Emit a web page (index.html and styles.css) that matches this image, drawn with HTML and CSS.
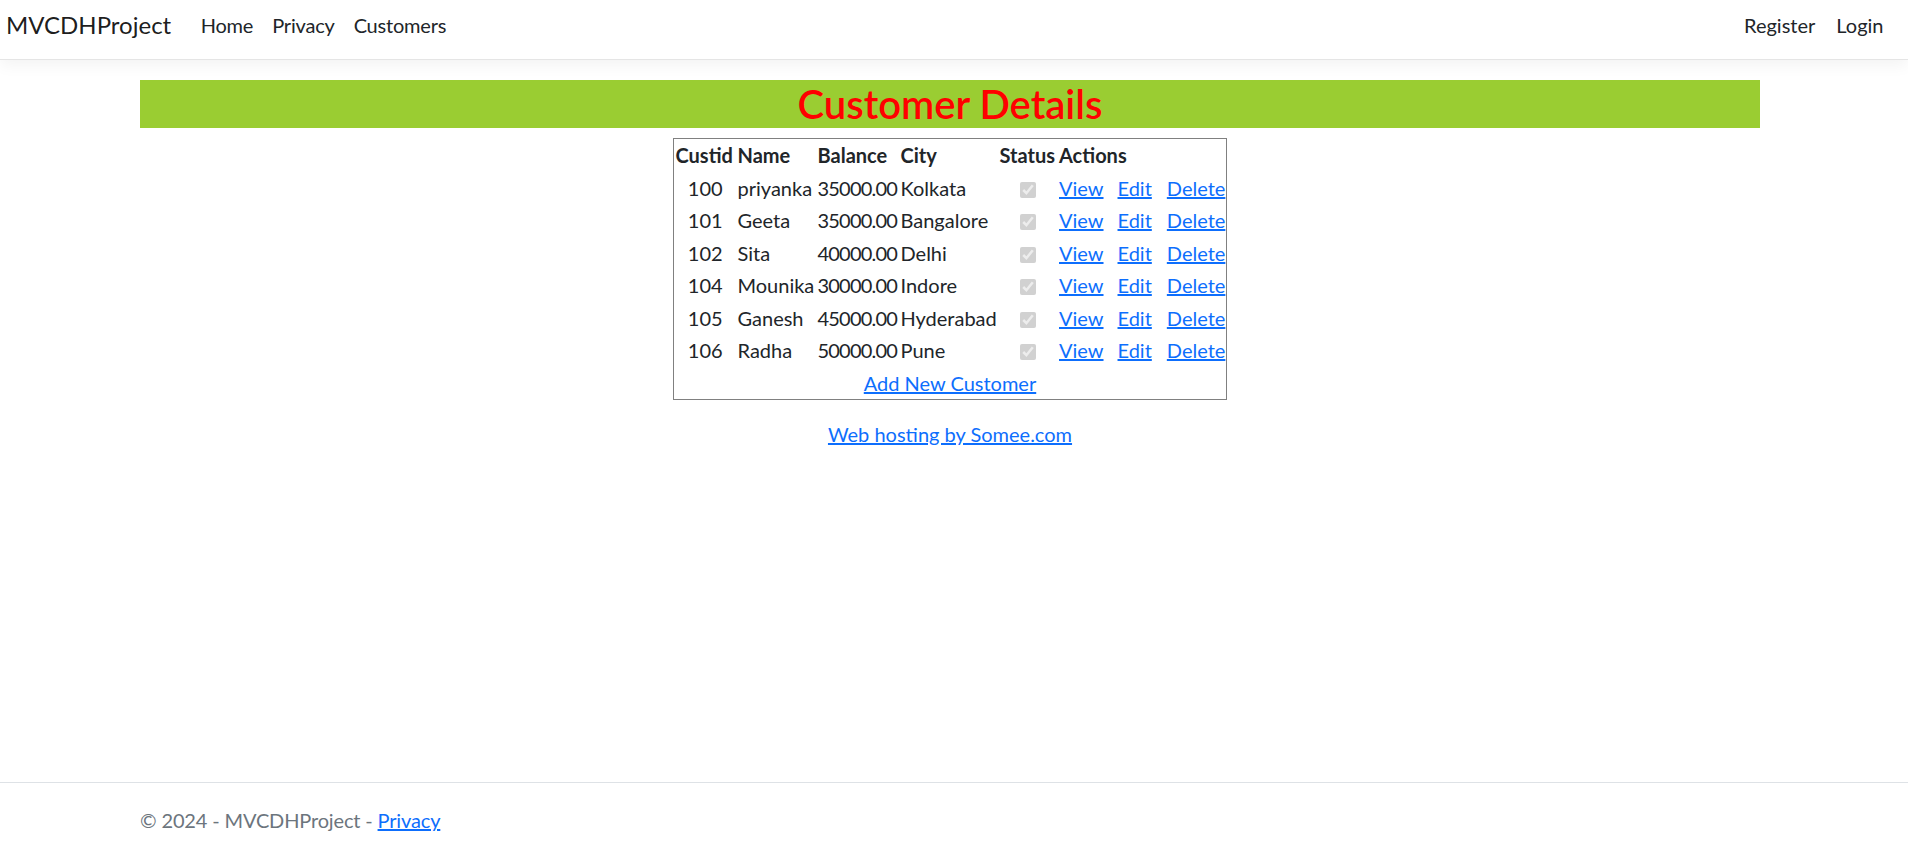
FILE: index.html
```html
<!DOCTYPE html>
<html lang="en">
<head>
<meta charset="utf-8">
<title>Customer Details - MVCDHProject</title>
<link rel="stylesheet" href="styles.css">
</head>
<body>
<header class="navbar">
  <a class="brand" href="#">MVCDHProject</a>
  <nav class="nav-main">
    <a class="nav-link" href="#">Home</a>
    <a class="nav-link" href="#">Privacy</a>
    <a class="nav-link" href="#">Customers</a>
  </nav>
  <nav class="nav-auth">
    <a class="nav-link" href="#">Register</a>
    <a class="nav-link" href="#">Login</a>
  </nav>
</header>
<div class="container">
  <main class="main">
    <h1 class="title">Customer Details</h1>
    <table class="customers">
      <colgroup>
        <col class="c-id"><col class="c-name"><col class="c-bal"><col class="c-city"><col class="c-status"><col class="c-actions">
      </colgroup>
      <thead>
        <tr><th>Custid</th><th>Name</th><th>Balance</th><th>City</th><th>Status</th><th>Actions</th></tr>
      </thead>
      <tbody>
        <tr><td class="id">100</td><td>priyanka</td><td class="bal">35000.00</td><td>Kolkata</td><td class="status"><input type="checkbox" checked disabled></td><td><div class="actions"><a href="#">View</a><a href="#">Edit</a><a href="#">Delete</a></div></td></tr>
        <tr><td class="id">101</td><td>Geeta</td><td class="bal">35000.00</td><td>Bangalore</td><td class="status"><input type="checkbox" checked disabled></td><td><div class="actions"><a href="#">View</a><a href="#">Edit</a><a href="#">Delete</a></div></td></tr>
        <tr><td class="id">102</td><td>Sita</td><td class="bal">40000.00</td><td>Delhi</td><td class="status"><input type="checkbox" checked disabled></td><td><div class="actions"><a href="#">View</a><a href="#">Edit</a><a href="#">Delete</a></div></td></tr>
        <tr><td class="id">104</td><td>Mounika</td><td class="bal">30000.00</td><td>Indore</td><td class="status"><input type="checkbox" checked disabled></td><td><div class="actions"><a href="#">View</a><a href="#">Edit</a><a href="#">Delete</a></div></td></tr>
        <tr><td class="id">105</td><td>Ganesh</td><td class="bal">45000.00</td><td>Hyderabad</td><td class="status"><input type="checkbox" checked disabled></td><td><div class="actions"><a href="#">View</a><a href="#">Edit</a><a href="#">Delete</a></div></td></tr>
        <tr><td class="id">106</td><td>Radha</td><td class="bal">50000.00</td><td>Pune</td><td class="status"><input type="checkbox" checked disabled></td><td><div class="actions"><a href="#">View</a><a href="#">Edit</a><a href="#">Delete</a></div></td></tr>
        <tr><td class="add" colspan="6"><a href="#">Add New Customer</a></td></tr>
      </tbody>
    </table>
    <p class="hosting"><a href="#">Web hosting by Somee.com</a></p>
  </main>
</div>
<footer class="footer">
  <div class="container">© 2024 - MVCDHProject - <a href="#">Privacy</a></div>
</footer>
</body>
</html>
```
FILE: styles.css
```css
html, body {
  margin: 0;
  padding: 0;
}
body {
  font-family: "Segoe UI", Lato, "Liberation Sans", sans-serif;
  font-size: 20px;
  line-height: 30px;
  color: #212529;
  background: #fff;
  min-height: 100vh;
  display: flex;
  flex-direction: column;
}
a {
  color: #0d6efd;
  text-decoration: underline;
}

/* navbar */
.navbar {
  height: 60px;
  box-sizing: border-box;
  display: flex;
  align-items: flex-start;
  padding: 10px 14px 0 6px;
  border-bottom: 1px solid #e5e5e5;
  box-shadow: 0 5px 15px rgba(0, 0, 0, 0.05);
  background: #fff;
}
.brand {
  font-size: 24px;
  line-height: 30px;
  color: rgba(0, 0, 0, 0.9);
  text-decoration: none;
  margin-right: 20px;
}
.nav-main, .nav-auth {
  display: flex;
  align-items: center;
}
.nav-auth {
  margin-left: auto;
}
.nav-link {
  color: #212529;
  text-decoration: none;
  padding: 0 9.5px;
  font-size: 20px;
  line-height: 30px;
}
.nav-main .nav-link {
  letter-spacing: -0.2px;
}
.nav-auth .nav-link {
  padding: 0 10.5px;
}

/* content */
.container {
  width: 1620px;
  margin: 0 148px 0 140px;
}
.main {
  padding-top: 20px;
}
.title {
  margin: 0;
  height: 48px;
  line-height: 48px;
  font-size: 40px;
  font-weight: 600;
  color: #ff0000;
  background: #9acd32;
  text-align: center;
}

.customers {
  margin: 10px auto 0;
  width: 553px;
  table-layout: fixed;
  border-collapse: separate;
  border-spacing: 0;
  border: 1px solid #808080;
}
.c-id { width: 62px; }
.c-name { width: 80px; }
.c-bal { width: 83px; }
.c-city { width: 99px; }
.c-status { width: 59.5px; }
.c-actions { width: 168px; }

.customers th,
.customers td {
  padding: 1.25px;
  text-align: left;
  white-space: nowrap;
  overflow: visible;
  vertical-align: middle;
}
.customers th {
  font-weight: 700;
}
.customers td.id {
  text-align: center;
}
.customers td.bal {
  letter-spacing: -0.8px;
}
.customers td.status {
  text-align: center;
}
.customers td.status input {
  width: 16px;
  height: 16px;
  margin: 0;
  vertical-align: -2px;
}
.actions {
  display: flex;
  gap: 14px;
}
.actions a:last-child {
  margin-left: 1px;
}
.customers td.add {
  text-align: center;
}

.hosting {
  margin: 19px 0 0;
  text-align: center;
}

/* footer */
.footer {
  margin-top: auto;
  border-top: 1px solid #dee2e6;
  padding: 22px 0 8px;
  color: #6c757d;
  white-space: nowrap;
  letter-spacing: -0.15px;
}
```
